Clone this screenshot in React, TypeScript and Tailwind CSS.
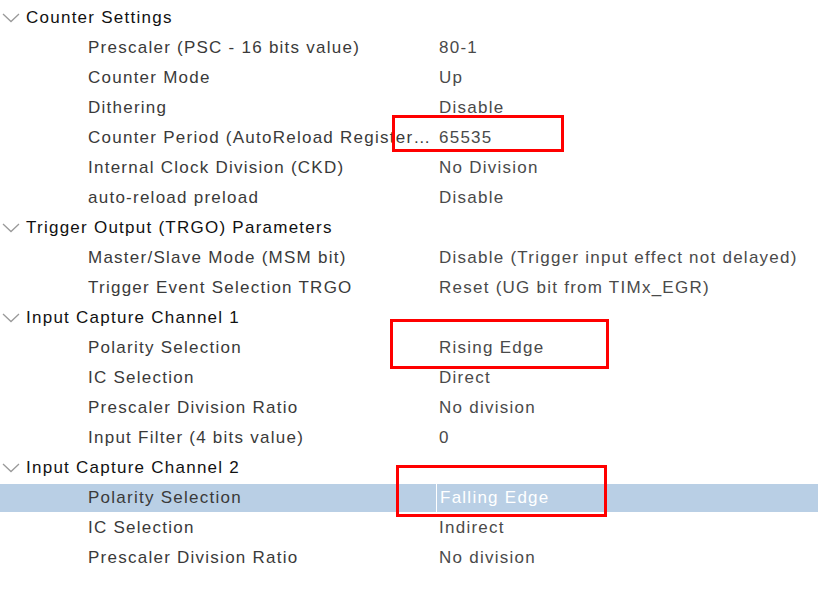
import React from "react"

type Row = {
  label: string
  value?: string
  group?: boolean
  selected?: boolean
}

const ROWS: Row[] = [
  { label: "Counter Settings", group: true },
  { label: "Prescaler (PSC - 16 bits value)", value: "80-1" },
  { label: "Counter Mode", value: "Up" },
  { label: "Dithering", value: "Disable" },
  { label: "Counter Period (AutoReload Register…", value: "65535" },
  { label: "Internal Clock Division (CKD)", value: "No Division" },
  { label: "auto-reload preload", value: "Disable" },
  { label: "Trigger Output (TRGO) Parameters", group: true },
  { label: "Master/Slave Mode (MSM bit)", value: "Disable (Trigger input effect not delayed)" },
  { label: "Trigger Event Selection TRGO", value: "Reset (UG bit from TIMx_EGR)" },
  { label: "Input Capture Channel 1", group: true },
  { label: "Polarity Selection", value: "Rising Edge" },
  { label: "IC Selection", value: "Direct" },
  { label: "Prescaler Division Ratio", value: "No division" },
  { label: "Input Filter (4 bits value)", value: "0" },
  { label: "Input Capture Channel 2", group: true },
  { label: "Polarity Selection", value: "Falling Edge", selected: true },
  { label: "IC Selection", value: "Indirect" },
  { label: "Prescaler Division Ratio", value: "No division" },
]

function Chevron() {
  return (
    <svg width="18" height="10" viewBox="0 0 18 10" className="shrink-0">
      <path d="M1 1 L9 8.5 L17 1" fill="none" stroke="#9a9a9a" strokeWidth="1.3" />
    </svg>
  )
}

function TreeRow({ row }: { row: Row }) {
  if (row.group) {
    return (
      <div className="h-[30px] flex items-center">
        <div className="w-[26px] pl-[2px] flex items-center">
          <Chevron />
        </div>
        <span className="text-[#111] whitespace-nowrap">{row.label}</span>
      </div>
    )
  }
  return (
    <div
      className={[
        "h-[30px] flex items-stretch",
        row.selected ? "py-px" : "",
      ].join(" ")}
    >
      <div
        className={[
          "flex-1 flex items-stretch",
          row.selected ? "bg-[#b9cfe5]" : "",
        ].join(" ")}
      >
        <div className="w-[436px] shrink-0 pl-[88px] flex items-center text-[#3a3a3a] whitespace-nowrap overflow-hidden">
          {row.label}
        </div>
        <div
          className={[
            "flex-1 pl-[3px] flex items-center whitespace-nowrap",
            row.selected ? "border-l border-white text-white" : "text-[#4a4a4a]",
          ].join(" ")}
        >
          {row.value}
        </div>
      </div>
    </div>
  )
}

export default function App() {
  return (
    <div className="relative w-[818px] h-[595px] bg-white overflow-hidden font-['Liberation_Sans',Arial,sans-serif] text-[17px] tracking-[1.25px]">
      <div className="pt-[3px]">
        {ROWS.map((r, i) => (
          <TreeRow key={i} row={r} />
        ))}
      </div>

      {/* annotation boxes */}
      <div className="absolute left-[392px] top-[115px] w-[172px] h-[37px] border-[3px] border-[#ff0000]" />
      <div className="absolute left-[390px] top-[319px] w-[219px] h-[50px] border-[3px] border-[#ff0000]" />
      <div className="absolute left-[396px] top-[465px] w-[211px] h-[52px] border-[3px] border-[#ff0000]" />
    </div>
  )
}
